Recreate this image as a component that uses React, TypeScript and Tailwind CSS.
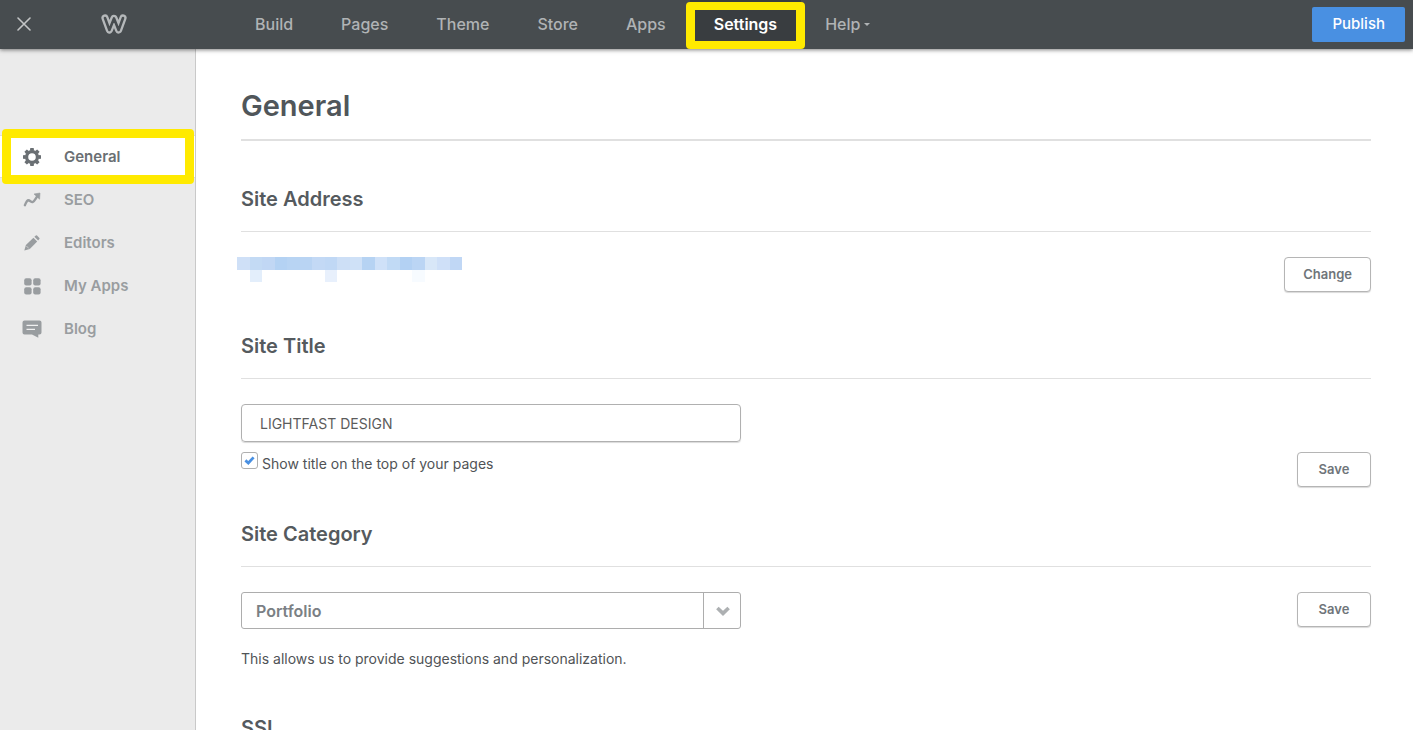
import { useState } from 'react';

interface IconProps {
  className?: string;
}

const navItems = ['Build', 'Pages', 'Theme', 'Store', 'Apps', 'Settings', 'Help'];

// fill of each block that hides the site address
const topBlocks = [
  '#cfe0f7', '#c3daf4', '#c1d7f4', '#b4d2f3', '#b8d4f3', '#b9d4f3', '#c3d9f5', '#c0d8f5', '#cddff6',
  '#cfe1f7', '#b6d3f3', '#cfe1f8', '#c1daf5', '#b3d1f3', '#bbd5f4', '#d8e7f8', '#cfe0f8', '#c0d7f5',
];
const lowerBlocks = [
  { col: 1, fill: '#e3eefb' },
  { col: 7, fill: '#e8f0fc' },
  { col: 14, fill: '#f7fbff' },
];

function GearIcon({ className }: IconProps) {
  return (
    <svg width="18" height="18" viewBox="-9 -9 18 18" className={className} aria-hidden="true">
      <circle r="5.4" fill="none" stroke="currentColor" strokeWidth="3.2" />
      {[0, 45, 90, 135, 180, 225, 270, 315].map((angle) => (
        <path key={angle} d="M-2.1 -6.2 L-1.7 -9 H1.7 L2.1 -6.2 Z" fill="currentColor" transform={`rotate(${angle})`} />
      ))}
    </svg>
  );
}

function TrendIcon({ className }: IconProps) {
  return (
    <svg width="18" height="16" viewBox="0 0 18 16" className={className} aria-hidden="true">
      <path d="M1.9 13.2 C3 10.6 3.8 8.4 5.4 8.3 C7 8.3 8 10.4 9.6 10.1 C11.2 9.7 12.2 7.4 14 4.6" fill="none" stroke="currentColor" strokeWidth="2.4" strokeLinecap="round" strokeLinejoin="round" />
      <path d="M11 2 L17 1 L16.6 7.2 Z" fill="currentColor" stroke="currentColor" strokeWidth="0.6" strokeLinejoin="round" />
    </svg>
  );
}

function PencilIcon({ className }: IconProps) {
  return (
    <svg width="16" height="16" viewBox="0 0 16 16" className={className} aria-hidden="true">
      <path d="M0.3 15.6 L1.9 10.1 L9.4 2.7 L13.2 6.5 L5.8 14 Z" fill="currentColor" />
      <path d="M10.4 1.8 L11.8 0.5 Q12.4 0 13 0.5 L15.4 2.9 Q15.9 3.5 15.4 4.1 L14.1 5.5 Z" fill="currentColor" />
      <path d="M2.4 11 L4.9 13.5" stroke="#ebebeb" strokeWidth="0.6" />
    </svg>
  );
}

function AppsIcon({ className }: IconProps) {
  return (
    <svg width="18" height="18" viewBox="-1 -1 18 18" fill="currentColor" className={className} aria-hidden="true">
      <rect x="0.2" y="0.2" width="7.4" height="7.4" rx="2" />
      <rect x="9.2" y="0.2" width="7.4" height="7.4" rx="2" />
      <rect x="0.2" y="9.2" width="7.4" height="7.4" rx="2" />
      <rect x="9.2" y="9.2" width="7.4" height="7.4" rx="2" />
    </svg>
  );
}

function BlogIcon({ className }: IconProps) {
  return (
    <svg width="20" height="18" viewBox="0 0 19 18" className={className} aria-hidden="true">
      <path d="M2 0.5 H17 Q19 0.5 19 2.5 V12.4 Q19 14.4 17 14.4 H15.8 V17.8 L9.5 14.4 H2 Q0 14.4 0 12.4 V2.5 Q0 0.5 2 0.5 Z" fill="currentColor" />
      <path d="M4 5.3 H15.5 M4 9.3 H12.5" stroke="#f0f0f0" strokeWidth="1.3" />
    </svg>
  );
}

function Logo() {
  return (
    <svg width="26" height="20" viewBox="0 0 26 20" fill="none" strokeLinecap="round" strokeLinejoin="round" aria-hidden="true">
      <path d="M4 4 L8.4 16 L13 4.4 L17.6 16 L22 4" stroke="#b5b8ba" strokeWidth="7.2" />
      <path d="M4 4 L8.4 16 L13 4.4 L17.6 16 L22 4" stroke="#474c4f" strokeWidth="2.6" />
    </svg>
  );
}

const sideItems = [
  { label: 'General', Icon: GearIcon },
  { label: 'SEO', Icon: TrendIcon },
  { label: 'Editors', Icon: PencilIcon },
  { label: 'My Apps', Icon: AppsIcon },
  { label: 'Blog', Icon: BlogIcon },
];

function Highlight({ className }: IconProps) {
  return <span className={`pointer-events-none absolute z-20 rounded border-[#ffea00] ${className}`} />;
}

function SectionTitle({ children }: { children: string }) {
  return (
    <h2 className="border-b border-[#e0e0e0] pb-[18px] text-[20px] leading-7 font-semibold text-[#555a5e]">
      {children}
    </h2>
  );
}

function SmallButton({ children }: { children: string }) {
  return (
    <button
      type="button"
      className="h-[35px] min-w-[74px] shrink-0 rounded border border-[#b5b5b5] bg-white px-[18px] text-[13px] font-semibold text-[#6f757a] shadow-[0_1px_1px_rgba(0,0,0,0.15)]"
    >
      {children}
    </button>
  );
}

export default function App() {
  const [page, setPage] = useState('General');
  const [title, setTitle] = useState('LIGHTFAST DESIGN');
  const [showTitle, setShowTitle] = useState(true);
  const [category, setCategory] = useState('Portfolio');

  return (
    <div className="flex h-screen flex-col bg-white font-['Inter',sans-serif]">
      <header className="relative z-10 flex h-[49px] shrink-0 items-center bg-[#474c4f] pr-2 pb-px shadow-[0_1px_4px_rgba(0,0,0,0.5)]">
        <button type="button" aria-label="Close" className="ml-4 flex h-4 w-4 items-center justify-center">
          <svg width="14" height="14" viewBox="0 0 14 14" stroke="#c3c5c6" strokeWidth="1.6" strokeLinecap="round">
            <path d="M1 1 L13 13 M13 1 L1 13" />
          </svg>
        </button>
        <a href="#home" aria-label="Home" className="ml-[69px]">
          <Logo />
        </a>
        <nav className="ml-[104px] flex h-full text-base font-medium text-[#b0b3b5]">
          {navItems.map((item) => (
            <a
              key={item}
              href={`#${item.toLowerCase()}`}
              className={`relative flex h-full items-center px-6 ${
                item === 'Settings' ? 'bg-[#393d40] font-semibold text-white' : ''
              }`}
            >
              {item}
              {item === 'Help' && (
                <svg width="6" height="3" viewBox="0 0 6 3" className="ml-1" fill="currentColor" aria-hidden="true">
                  <path d="M0 0 H6 L3 3 Z" />
                </svg>
              )}
              {item === 'Settings' && <Highlight className="-inset-x-1 top-0.5 -bottom-px border-8 border-x-9" />}
            </a>
          ))}
        </nav>
        <button type="button" className="ml-auto h-[35px] rounded-xs bg-[#4990e2] px-5 text-[15px] font-medium text-white">
          Publish
        </button>
      </header>

      <div className="flex min-h-0 flex-1">
        <aside className="w-[196px] shrink-0 border-r border-[#c9c9c9] bg-[#ebebeb] pt-[86px]">
          <nav className="flex flex-col text-[15px] font-semibold">
            {sideItems.map(({ label, Icon }) => (
              <a
                key={label}
                href={`#${label.toLowerCase().replace(' ', '-')}`}
                onClick={() => setPage(label)}
                className={`relative flex h-[43px] items-center ${
                  page === label ? 'border-y border-[#dcdcdc] bg-white text-[#6a6f73]' : 'text-[#999da0]'
                }`}
              >
                <span className="ml-5 flex w-6 justify-center">
                  <Icon />
                </span>
                <span className="ml-5 pt-0.5">{label}</span>
                {page === label && <Highlight className="-inset-y-[7px] right-px left-0.5 border-9" />}
              </a>
            ))}
          </nav>
        </aside>

        <main className="min-w-0 flex-1 overflow-y-auto pt-[39px] pr-[42px] pl-[45px] [scrollbar-width:none]">
          <h1 className="border-b-2 border-[#e0e0e0] pb-[15px] text-[29px] leading-9 font-semibold text-[#50565a]">
            General
          </h1>

          <section className="pt-11 pb-10">
            <SectionTitle>Site Address</SectionTitle>
            <div className="flex items-start justify-between pt-[25px]">
              <svg width="225" height="25" viewBox="0 0 225 25" className="-ml-1" role="img" aria-label="Hidden site address">
                {topBlocks.map((fill, i) => (
                  <rect key={i} x={i * 12.5} y="0" width="12.5" height="12.5" fill={fill} shapeRendering="crispEdges" />
                ))}
                {lowerBlocks.map(({ col, fill }) => (
                  <rect key={col} x={col * 12.5} y="12.5" width="12.5" height="12" fill={fill} shapeRendering="crispEdges" />
                ))}
              </svg>
              <SmallButton>Change</SmallButton>
            </div>
          </section>

          <section className="pb-[33px]">
            <SectionTitle>Site Title</SectionTitle>
            <div className="flex items-end justify-between pt-[25px]">
              <div className="w-[500px]">
                <input
                  type="text"
                  aria-label="Site title"
                  value={title}
                  onChange={(e) => setTitle(e.target.value)}
                  className="h-[38px] w-full rounded border border-[#b0b0b0] px-[18px] text-sm text-[#5c5c5c] shadow-[0_1px_1px_rgba(0,0,0,0.15)]"
                />
                <label className="mt-2.5 flex h-[35px] items-start text-sm text-[#505356]">
                  <span className="grid">
                    <input
                      type="checkbox"
                      checked={showTitle}
                      onChange={(e) => setShowTitle(e.target.checked)}
                      className="col-start-1 row-start-1 h-[17px] w-[17px] appearance-none rounded-[3px] border border-[#b0b0b0] bg-white"
                    />
                    {showTitle && (
                      <svg width="17" height="17" viewBox="0 0 17 17" className="pointer-events-none col-start-1 row-start-1" fill="none" stroke="#4990e2" strokeWidth="2.8" aria-hidden="true">
                        <path d="M4.4 8.4 L7.3 11 L12.6 5.4" />
                      </svg>
                    )}
                  </span>
                  <span className="ml-1 leading-6">Show title on the top of your pages</span>
                </label>
              </div>
              <SmallButton>Save</SmallButton>
            </div>
          </section>

          <section className="pb-[45px]">
            <SectionTitle>Site Category</SectionTitle>
            <div className="flex items-start justify-between pt-[25px]">
              <div className="relative w-[500px]">
                <select
                  aria-label="Site category"
                  value={category}
                  onChange={(e) => setCategory(e.target.value)}
                  className="h-[37px] w-full appearance-none rounded-[3px] border border-[#adadad] bg-white px-3.5 text-base font-semibold text-[#7b8084]"
                >
                  <option>Portfolio</option>
                  <option>Business</option>
                  <option>Personal</option>
                </select>
                <span className="pointer-events-none absolute inset-y-0 right-0 flex w-[38px] items-center justify-center border-l border-[#adadad]">
                  <svg width="14" height="10" viewBox="0 0 14 10" fill="none" stroke="#adb0b2" strokeWidth="3.6" aria-hidden="true">
                    <path d="M1.4 2 L7 7.4 L12.6 2" />
                  </svg>
                </span>
              </div>
              <SmallButton>Save</SmallButton>
            </div>
            <p className="mt-5 text-sm text-[#505356]">This allows us to provide suggestions and personalization.</p>
          </section>

          <section className="pb-10">
            <SectionTitle>SSL</SectionTitle>
          </section>
        </main>
      </div>
    </div>
  );
}
